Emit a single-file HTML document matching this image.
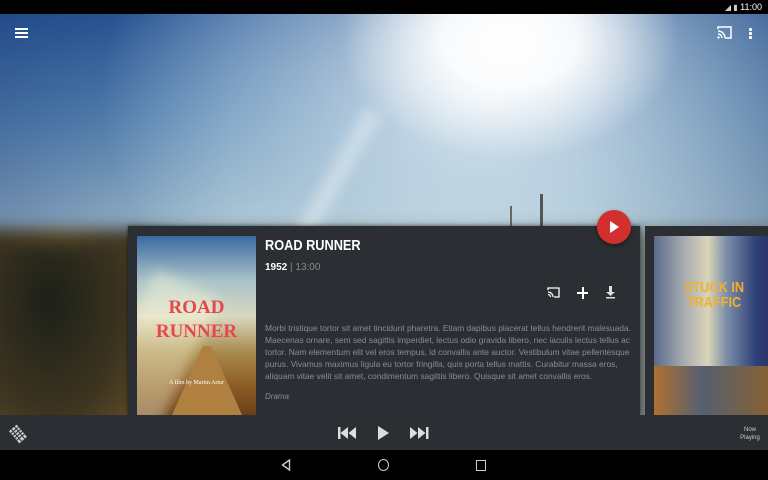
<!DOCTYPE html>
<html><head><style>
*{margin:0;padding:0;box-sizing:border-box}
body{width:768px;height:480px;overflow:hidden;position:relative;font-family:"Liberation Sans",sans-serif;background:#000}
.bg{position:absolute;left:0;top:14px;width:768px;height:401px;overflow:hidden;
background:
radial-gradient(ellipse 170px 120px at 510px 25px,#ffffff 0%,rgba(255,255,255,.9) 40%,rgba(255,255,255,0) 100%),
radial-gradient(ellipse 380px 280px at 480px 80px,rgba(230,240,245,.9) 0%,rgba(200,220,230,.45) 60%,rgba(200,220,230,0) 100%),
linear-gradient(90deg,rgba(20,50,110,.35) 0%,rgba(0,0,0,0) 30%,rgba(0,0,0,0) 75%,rgba(30,60,110,.35) 100%),
linear-gradient(180deg,#2a5898 0%,#5a88b6 25%,#9dbccf 50%,#c8d6d8 70%,#a9b7b3 100%);}
.ground{position:absolute;left:-20px;top:215px;width:810px;height:200px;
background:linear-gradient(90deg,#3a3220 0%,#5c4a25 10%,#3f3a2a 18%,#6b6e66 25%,#8a9594 60%,#5a6060 100%);filter:blur(8px)}
.ground2{position:absolute;left:-10px;top:230px;width:150px;height:190px;background:radial-gradient(ellipse at 40% 30%,#1c2018,#3d3420 60%,#6a5326 100%);filter:blur(8px)}
.beam{position:absolute;left:300px;top:80px;width:18px;height:260px;background:rgba(255,255,255,.35);transform:rotate(30deg);filter:blur(6px)}
.status{position:absolute;left:0;top:0;width:768px;height:14px;background:#000;color:#fff;font-size:9px;text-align:right;padding-right:6px;line-height:14px}
.card{position:absolute;left:128px;top:226px;width:512px;height:189px;background:#2b2e33;box-shadow:0 0 4px rgba(0,0,0,.6)}
.poster{position:absolute;left:9px;top:10px;width:119px;height:179px;overflow:hidden;
background:linear-gradient(180deg,#3b6aa0 0%,#a9c3c9 25%,#d8d8c0 45%,#a88a4e 65%,#8a5a24 85%,#6b3e18 100%)}
.card2{position:absolute;left:645px;top:226px;width:130px;height:189px;background:#2b2e33}
.poster2{position:absolute;left:9px;top:10px;width:120px;height:179px;overflow:hidden;background:linear-gradient(90deg,#5a6a8a 0%,#a8acb0 25%,#d9d4b8 45%,#7d90a8 60%,#2e3f78 85%,#2a3060 100%)}
.t{position:absolute;color:#fff}
.fab{position:absolute;left:597px;top:210px;width:34px;height:34px;border-radius:50%;background:#d32f2f;box-shadow:0 2px 4px rgba(0,0,0,.4)}
.bar{position:absolute;left:0;top:415px;width:768px;height:35px;background:#2b2e33}
.nav{position:absolute;left:0;top:450px;width:768px;height:30px;background:#000}
</style></head><body>
<div class="bg"><div class="ground"></div><div class="ground2"></div><div class="beam"></div>
<div style="position:absolute;left:540px;top:180px;width:3px;height:40px;background:#555"></div>
<div style="position:absolute;left:510px;top:192px;width:2px;height:28px;background:#666"></div>
</div>
<div class="status"><span style="font-size:8px;opacity:.8">◢ ▮</span> 11:00</div>
<div style="position:absolute;left:15px;top:28px;width:13px;height:2px;background:#fff;box-shadow:0 4px 0 #fff,0 8px 0 #fff"></div>
<svg style="position:absolute;left:717px;top:26px" width="15" height="13" viewBox="0 0 15 13"><path d="M1 3V1h13v11H8" stroke="#fff" stroke-width="1.5" fill="none"/><path d="M1 5a7 7 0 0 1 7 7M1 8a4 4 0 0 1 4 4" stroke="#fff" stroke-width="1.4" fill="none"/><circle cx="1.5" cy="11.5" r="1.2" fill="#fff"/></svg>
<div style="position:absolute;left:749px;top:28px;width:3px;height:3px;background:#fff;box-shadow:0 4px 0 #fff,0 8px 0 #fff;border-radius:1px"></div>

<div class="card">
<div class="poster">
<div style="position:absolute;left:-20px;top:40px;width:70px;height:170px;background:rgba(255,255,220,.4);transform:rotate(25deg);filter:blur(6px)"></div>
<div style="position:absolute;left:30px;top:110px;width:80px;height:80px;background:#b08040;clip-path:polygon(45% 0,55% 0,100% 100%,0 100%)"></div>
<div style="position:absolute;width:119px;text-align:center;top:60px;font-family:'Liberation Serif',serif;font-weight:bold;font-size:19px;line-height:24px;color:#e8474a">ROAD<br>RUNNER</div>
<div style="position:absolute;width:119px;text-align:center;top:144px;font-family:'Liberation Serif',serif;font-size:6px;color:#fff">A film by Martin Artur</div>
</div>
<div class="t" style="left:137px;top:11px;font-size:15px;font-weight:bold;transform:scaleX(.85);transform-origin:left">ROAD RUNNER</div>
<div class="t" style="left:137px;top:36px;font-size:10px"><b>1952</b> <span style="color:#888">| 13:00</span></div>
<svg style="position:absolute;left:419px;top:61px" width="13" height="11" viewBox="0 0 13 11"><path d="M1 3V1h11v9H7" stroke="#fff" stroke-width="1.3" fill="none"/><path d="M1 5a5 5 0 0 1 5 5M1 7.5a2.5 2.5 0 0 1 2.5 2.5" stroke="#fff" stroke-width="1.2" fill="none"/></svg>
<div style="position:absolute;left:449px;top:66px;width:11px;height:2px;background:#fff"></div>
<div style="position:absolute;left:453.5px;top:61px;width:2px;height:12px;background:#fff"></div>
<svg style="position:absolute;left:478px;top:60px" width="9" height="13" viewBox="0 0 9 13"><path d="M3 0h3v6h3L4.5 10 0 6h3z" fill="#ddd"/><rect x="0" y="11" width="9" height="1.5" fill="#ddd"/></svg>
<div class="t" style="left:137px;top:96px;width:370px;font-size:8.4px;line-height:12px;color:#8a8d92">Morbi tristique tortor sit amet tincidunt pharetra. Etiam dapibus placerat tellus hendrerit malesuada. Maecenas ornare, sem sed sagittis imperdiet, lectus odio gravida libero, nec iaculis lectus tellus ac tortor. Nam elementum elit vel eros tempus, id convallis ante auctor. Vestibulum vitae pellentesque purus. Vivamus maximus ligula eu tortor fringilla, quis porta tellus mattis. Curabitur massa eros, aliquam vitae velit sit amet, condimentum sagittis libero. Quisque sit amet convallis eros.</div>
<div class="t" style="left:137px;top:166px;font-size:8px;font-style:italic;color:#8a8d92">Drama</div>
</div>
<div class="fab"><svg style="position:absolute;left:13px;top:11px" width="10" height="12"><path d="M0 0L9 6 0 12z" fill="#fff"/></svg></div>

<div class="card2"><div class="poster2">
<div style="position:absolute;left:0;top:130px;width:120px;height:50px;background:linear-gradient(90deg,#b07030,#556070 40%,#8a6030)"></div>
<div style="position:absolute;left:10px;top:44px;width:100px;text-align:center;font-weight:bold;font-size:15px;line-height:15px;color:#f0b030;transform:scaleX(.85)">STUCK IN<br>TRAFFIC</div>
</div></div>

<div class="bar">
<svg style="position:absolute;left:8px;top:9px" width="20" height="20" viewBox="0 0 20 20"><g transform="rotate(-40 10 10)"><rect x="5" y="2" width="10" height="16" fill="#ccc"/><path d="M5 5h10M5 8h10M5 11h10M5 14h10M8 2v16M12 2v16" stroke="#2b2e33" stroke-width="1"/></g></svg>
<svg style="position:absolute;left:338px;top:11px" width="20" height="14"><rect x="0" y="1" width="2.5" height="12" fill="#ddd"/><path d="M10 1L2.5 7 10 13zM18 1L10.5 7 18 13z" fill="#ddd"/></svg>
<svg style="position:absolute;left:378px;top:11px" width="12" height="14"><path d="M0 0L11 7 0 14z" fill="#ddd"/></svg>
<svg style="position:absolute;left:410px;top:11px" width="20" height="14"><path d="M0 1L7.5 7 0 13zM8 1L15.5 7 8 13z" fill="#ddd"/><rect x="16" y="1" width="2.5" height="12" fill="#ddd"/></svg>
<div style="position:absolute;left:732px;top:11px;width:36px;text-align:center;color:#ccc;font-size:6px;line-height:8px">Now<br>Playing</div>
</div>
<div class="nav">
<svg style="position:absolute;left:281px;top:9px" width="10" height="12"><path d="M8.5 1L1.5 6 8.5 11z" stroke="#ccc" stroke-width="1.4" fill="none"/></svg>
<div style="position:absolute;left:378px;top:9px;width:11px;height:12px;border:1.5px solid #ccc;border-radius:50%"></div>
<div style="position:absolute;left:476px;top:10px;width:10px;height:11px;border:1.5px solid #ccc"></div>
</div>
</body></html>
